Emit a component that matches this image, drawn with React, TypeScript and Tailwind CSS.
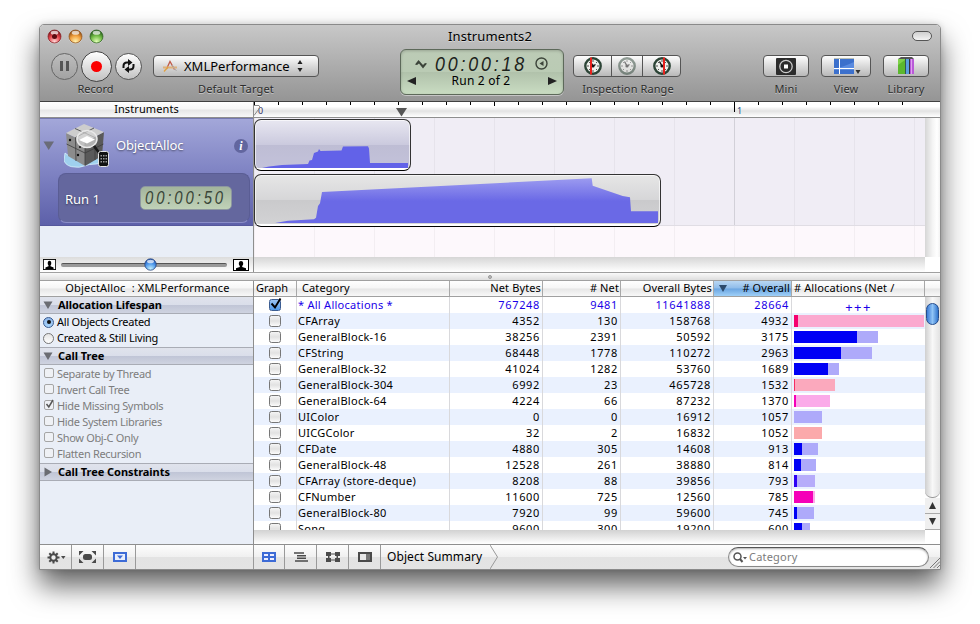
import React from "react";

type Row = { name: string; nb: string; n: string; ob: string; o: string; net: number; all: number; dark: string; light: string };

const BLUE = "#0000f5";
const PALE = "#aeaafa";

const rows: Row[] = [
  { name: "* All Allocations *", nb: "767248", n: "9481", ob: "11641888", o: "28664", net: 0, all: 0, dark: BLUE, light: PALE },
  { name: "CFArray", nb: "4352", n: "130", ob: "158768", o: "4932", net: 4, all: 130, dark: "#f5006e", light: "#fba9cf" },
  { name: "GeneralBlock-16", nb: "38256", n: "2391", ob: "50592", o: "3175", net: 63, all: 84, dark: BLUE, light: PALE },
  { name: "CFString", nb: "68448", n: "1778", ob: "110272", o: "2963", net: 47, all: 78, dark: BLUE, light: PALE },
  { name: "GeneralBlock-32", nb: "41024", n: "1282", ob: "53760", o: "1689", net: 34, all: 45, dark: BLUE, light: PALE },
  { name: "GeneralBlock-304", nb: "6992", n: "23", ob: "465728", o: "1532", net: 1, all: 40.5, dark: "#f52d62", light: "#fba9bd" },
  { name: "GeneralBlock-64", nb: "4224", n: "66", ob: "87232", o: "1370", net: 2, all: 36, dark: "#f500b8", light: "#fbaae9" },
  { name: "UIColor", nb: "0", n: "0", ob: "16912", o: "1057", net: 0, all: 28, dark: BLUE, light: PALE },
  { name: "UICGColor", nb: "32", n: "2", ob: "16832", o: "1052", net: 0, all: 28, dark: BLUE, light: "#fba9ab" },
  { name: "CFDate", nb: "4880", n: "305", ob: "14608", o: "913", net: 8, all: 24, dark: BLUE, light: PALE },
  { name: "GeneralBlock-48", nb: "12528", n: "261", ob: "38880", o: "814", net: 7, all: 22, dark: BLUE, light: PALE },
  { name: "CFArray (store-deque)", nb: "8208", n: "88", ob: "39856", o: "793", net: 3, all: 21, dark: "#2d00f5", light: "#b6acfa" },
  { name: "CFNumber", nb: "11600", n: "725", ob: "12560", o: "785", net: 19, all: 21, dark: "#f500b8", light: "#fbaae9" },
  { name: "GeneralBlock-80", nb: "7920", n: "99", ob: "59600", o: "745", net: 3, all: 20, dark: BLUE, light: PALE },
  { name: "Song", nb: "9600", n: "300", ob: "19200", o: "600", net: 8, all: 16, dark: BLUE, light: PALE },
];

const ticks = Array.from({ length: 28 }, (_, i) => i);

function Light({ kind }: { kind: "red" | "amber" | "green" }) {
  const c = {
    red: ["#ffd9d9", "#e8494f", "#7c1218"],
    amber: ["#fff3b0", "#f2a13f", "#8a4a12"],
    green: ["#e2ffb8", "#74bd48", "#245a18"],
  }[kind];
  return (
    <svg width="15" height="15" viewBox="0 0 15 15" className="block">
      <defs>
        <radialGradient id={kind} cx="50%" cy="88%" r="80%">
          <stop offset="0" stopColor={c[0]} />
          <stop offset="0.55" stopColor={c[1]} />
          <stop offset="1" stopColor={c[2]} />
        </radialGradient>
      </defs>
      <circle cx="7.5" cy="8" r="7" fill="#e0e0e0" opacity=".6" />
      <circle cx="7.5" cy="7.5" r="6.5" fill={`url(#${kind})`} stroke={c[2]} strokeWidth=".7" />
      <ellipse cx="7.5" cy="3.8" rx="3.8" ry="2" fill="#fff" opacity=".7" />
      {kind === "red" && <circle cx="7.5" cy="7.5" r="2.5" fill="#5c0a10" />}
    </svg>
  );
}

function Clock({ mark, faded }: { mark?: number; faded?: boolean }) {
  return (
    <svg width="20" height="20" viewBox="0 0 20 20" className="block" opacity={faded ? 0.5 : 1}>
      <circle cx="10" cy="10" r="7.7" fill="#eef0ec" stroke="#2c4436" strokeWidth="2.4" />
      <g stroke="#555" strokeWidth="1">
        <path d="M10 4v2M10 14v2M4 10h2M14 10h2M6 6l1 1M14 6l-1 1M6 14l1-1M14 14l-1-1" />
      </g>
      <path d="M7.5 5.5L10 10l2.5-1.5" stroke="#111" strokeWidth="1.4" fill="none" />
      <circle cx="10" cy="10" r="1.6" fill="#111" />
      {mark !== undefined && <path d={`M${mark} 1.5v17`} stroke="#e8201c" strokeWidth="2" />}
    </svg>
  );
}

function CheckBox({ on }: { on?: boolean }) {
  return (
    <span className={`relative block size-[12px] rounded-[2.5px] border ${on ? "border-[#3b5d92] bg-linear-to-b from-[#9cc4f0] to-[#4f9ae8]" : "border-[#777] bg-linear-to-b from-[#f4f4f4] via-[#e2e2e2] to-[#fbfbfb]"}`}>
      {on && (
        <svg width="14" height="14" viewBox="0 0 14 14" className="absolute -top-[3px] -left-px">
          <path d="M2.500 6.500l3.500 4L11.500 1.500" fill="none" stroke="#000" strokeWidth="1.900" />
        </svg>
      )}
    </span>
  );
}

function SmallCheck({ on, children }: { on?: boolean; children: string }) {
  return (
    <div className="flex h-[16px] items-center pl-[4px] text-[#7d7d7d]">
      <span className="relative -top-px block size-[10px] shrink-0 rounded-[2px] border border-[#a5a5a5] bg-[#eff1f5]">
        {on && (
          <svg width="10" height="11" viewBox="0 0 10 11" className="absolute -top-[3px] left-0">
            <path d="M1.5 6l2.3 3L8 2" fill="none" stroke="#555" strokeWidth="1.5" />
          </svg>
        )}
      </span>
      <span className="ml-[3px] whitespace-nowrap tracking-[-0.33px]">{children}</span>
    </div>
  );
}

function Radio({ on, children }: { on?: boolean; children: string }) {
  return (
    <div className="flex h-[16px] items-center pl-[3px]">
      <span className={`flex size-[11px] shrink-0 items-center justify-center rounded-full border ${on ? "border-[#36598f] bg-linear-to-b from-[#8fb6ea] to-[#a7d4fb]" : "border-[#777] bg-linear-to-b from-[#e4e4e4] to-white"}`}>
        {on && <span className="size-[4px] rounded-full bg-[#111]" />}
      </span>
      <span className="ml-[3px] whitespace-nowrap tracking-[-0.24px]">{children}</span>
    </div>
  );
}

function Section({ open, children }: { open?: boolean; children: string }) {
  return (
    <div className="flex h-[17px] items-center border-b border-[#a9acb5] bg-[linear-gradient(#e0e3ec_0,#dadeea_50%,#c0c5d6_51%,#cfd3e0_100%)] pl-[3px] font-bold">
      <svg width="10" height="10" viewBox="0 0 10 10" className="shrink-0">
        <path d={open ? "M0.5 1.5h9L5 9z" : "M1.5 0.5v9L9 5z"} fill="#6a6c72" />
      </svg>
      <span className="ml-[5px] whitespace-nowrap tracking-[-0.05px]">{children}</span>
    </div>
  );
}

function ToolButton({ label, width, children }: { label: string; width: string; children: React.ReactNode }) {
  return (
    <div className={`flex flex-col items-center ${width}`}>
      <div className="flex h-[22px] w-full items-center justify-center rounded-[4px] border border-[#555] bg-linear-to-b from-[#fdfdfd] to-[#b9b9b9]">{children}</div>
      <span className="mt-[4px] h-[16px] leading-[16px] whitespace-nowrap tracking-[0.15px] text-[#2c2c2c] [text-shadow:0_1px_0_#ffffff70]">{label}</span>
    </div>
  );
}

function Person({ big }: { big?: boolean }) {
  return (
    <svg width={big ? 16 : 13} height={big ? 12 : 11} viewBox="0 0 16 12" preserveAspectRatio="none" className="block">
      <rect x=".5" y=".5" width="15" height="11" fill="#fff" stroke="#000" />
      <path d="M3 11V9.3L6.8 8V7Q5.6 5.8 5.8 4 6 2 8 2t2.2 2q.2 1.800-1 3v1L13 9.300V11z" fill="#000" />
    </svg>
  );
}

function CubeIcon() {
  return (
    <svg width="46" height="46" viewBox="0 0 46 46" className="block">
      <path d="M0 38l1-8 4 3 3 1 11 1 18-3 4 5q-4 4-9 4-7 0-12 2-5 2-9 1Q3 44 0 38z" fill="#9fd0ee" stroke="#d8f1fc" strokeWidth=".8" />
      <path d="M2 10L21 19v24L4 33z" fill="#8c8c8c" />
      <path d="M21 19L40 9l-2 24-17 10z" fill="#5a5a5a" />
      <path d="M2 10L20 1l20 8-19 10z" fill="#cdcdcd" />
      <path d="M11 5.500l20 9M30 5L11.500 14.500M2.500 21L21 30l18.500-9M11.500 14.500L12 38M31 14v23M21 19v23" stroke="#3c3c3c" strokeWidth=".8" fill="none" />
      <circle cx="6" cy="17" r="1.200" fill="#111" /><circle cx="16" cy="24" r="1" fill="#111" /><circle cx="14" cy="32" r="1.200" fill="#111" />
      <ellipse cx="23" cy="16" rx="10" ry="8.500" fill="#d6d6d6" fillOpacity=".7" stroke="#e9e9e9" strokeWidth="1.500" />
      <path d="M15 17l8 3.500 8-4-8-3.500z" fill="#fff" />
      <path d="M30 23l6 8" stroke="#1a1a1a" strokeWidth="2.600" />
      <rect x="34.500" y="28.500" width="10" height="15" rx="2" fill="#111" stroke="#e4e4e4" strokeWidth="1" />
      <g fill="#999"><path d="M36.500 32h1.500v1.500h-1.500zM39 32h1.500v1.500H39zM41.500 32H43v1.500h-1.500zM36.500 35h1.500v1.500h-1.500zM39 35h1.500v1.500H39zM41.500 35H43v1.500h-1.500zM36.500 38h1.500v1.500h-1.500zM39 38h1.500v1.500H39zM41.500 38H43v1.500h-1.500z" /></g>
    </svg>
  );
}

const head = "flex h-full items-center whitespace-nowrap border-r border-[#a8a8a8] tracking-[0.12px]";
const HEADER_BG = "bg-[linear-gradient(#ffffff_0,#f6f6f6_48%,#e6e6e6_52%,#f8f8f8_100%)]";

export default function App() {
  return (
    <div className="h-[624px] w-[980px] overflow-hidden bg-white pt-[24px] pl-[39px] font-['Noto_Sans','Open_Sans',sans-serif] text-[11px] leading-[14px] text-black">
      <div className="flex h-[546px] w-[902px] flex-col overflow-hidden rounded-t-[5px] border border-[#8a8a8a] bg-white shadow-[0_16px_28px_rgba(0,0,0,0.62),0_0_6px_rgba(0,0,0,0.15)]">
        <header className="h-[77px] shrink-0 border-b border-[#404040] bg-linear-to-b from-[#c8c8c8] to-[#959595]">
          <div className="flex h-[22px] items-center">
            <div className="flex w-[300px] gap-[6px] pl-[7px]">
              <Light kind="red" /><Light kind="amber" /><Light kind="green" />
            </div>
            <div className="flex-1 text-center text-[13px] leading-[20px] tracking-[0.1px] [text-shadow:0_1px_0_#ffffff70]">Instruments2</div>
            <div className="flex w-[300px] justify-end pr-[8px]">
              <span className="h-[10px] w-[20px] rounded-[5px] border border-[#555] bg-linear-to-b from-[#cfcfcf] to-[#f4f4f4]" />
            </div>
          </div>
          <div className="flex pt-[2px]">
            <div className="ml-[11px] flex w-[91px] flex-col items-center">
              <div className="flex h-[34px] items-center gap-[3px]">
                <span className="flex size-[27px] items-center justify-center gap-[3px] rounded-full border border-[#666] bg-linear-to-b from-[#bdbdbd] to-[#a2a2a2]">
                  <i className="h-[10px] w-[3px] bg-[#555]" /><i className="h-[10px] w-[3px] bg-[#555]" />
                </span>
                <span className="flex size-[31px] items-center justify-center rounded-full border border-[#444] bg-linear-to-b from-white to-[#c2c2c2]">
                  <i className="size-[11px] rounded-full bg-[#fb0000]" />
                </span>
                <span className="flex size-[27px] items-center justify-center rounded-full border border-[#555] bg-linear-to-b from-white to-[#c2c2c2]">
                  <svg width="15" height="14" viewBox="0 0 15 14" fill="none" stroke="#111" strokeWidth="2">
                    <path d="M2.500 9V7q0-3.500 3.500-3.500h2" /><path d="M12.500 5v2q0 3.500-3.500 3.500H7" />
                    <path d="M7 0l4.500 3.500L7 7zM8 7l-4.500 3.500L8 14z" fill="#111" stroke="none" />
                  </svg>
                </span>
              </div>
              <span className="mt-[-2px] mr-[2px] h-[16px] leading-[16px] text-[#2c2c2c] [text-shadow:0_1px_0_#ffffff70]">Record</span>
            </div>
            <div className="ml-[11px] flex w-[166px] flex-col items-center pt-[6px]">
              <div className="flex h-[22px] w-full items-center rounded-[4px] border border-[#555] bg-linear-to-b from-[#fdfdfd] to-[#b9b9b9] pl-[8px]">
                <svg width="16" height="14" viewBox="0 0 16 14" fill="none" className="shrink-0">
                  <path d="M4.500 10L8 2.500l4.500 8" stroke="#c05a48" strokeWidth="1.300" />
                  <path d="M1 8.500h14" stroke="#dfb07a" strokeWidth="1.800" /><path d="M2 12.500l4-4.500" stroke="#e0a040" strokeWidth="1.300" /><path d="M10 6l4.500 6" stroke="#aaa" />
                </svg>
                <span className="ml-[6px] w-[113px] text-[13px] leading-[20px] whitespace-nowrap">XMLPerformance</span>
                <svg width="6" height="12" viewBox="0 0 6 12"><path d="M3 0l2.500 4h-5zM3 12l2.500-4h-5z" fill="#222" /></svg>
              </div>
              <span className="mt-[4px] h-[16px] leading-[16px] tracking-[0.18px] whitespace-nowrap text-[#2c2c2c] [text-shadow:0_1px_0_#ffffff70]">Default Target</span>
            </div>
            <div className="ml-[81px] flex h-[46px] w-[164px] flex-col rounded-[6px] border border-[#5d695a] bg-[linear-gradient(#bccbb6_0,#bacbb4_50%,#b1c2ab_51%,#c9dcc2_100%)] shadow-[0_1px_0_#ffffff70,inset_0_1px_3px_#00000030]">
              <div className="flex h-[24px] items-center pt-[3px] pl-[13px]">
                <svg width="14" height="12" viewBox="0 0 14 12" fill="#3c443a" className="shrink-0"><path d="M1 6.500L4.500 2l4.500 5L11 5l2 .5L9 10.500 5 5.500 3 7z" /></svg>
                <span className="ml-[7px] w-[95px] shrink-0 origin-left scale-x-85 font-['Liberation_Sans',sans-serif] text-[21px] leading-[22px] tracking-[3.3px] whitespace-nowrap text-[#1d231c] italic">00:00:18</span>
                <svg width="13" height="13" viewBox="0 0 13 13" className="ml-[5px] shrink-0"><circle cx="6.500" cy="6.500" r="5.500" fill="none" stroke="#3c443a" strokeWidth="1.400" /><path d="M8.500 4v5L4.500 6.500z" fill="#3c443a" /></svg>
              </div>
              <div className="flex h-[14px] items-center justify-between px-[6px]">
                <svg width="9" height="8" viewBox="0 0 9 8"><path d="M9 0v8L0 4z" fill="#222" /></svg>
                <span className="mr-[2px] text-[12px] leading-[16px] tracking-[0.2px]">Run 2 of 2</span>
                <svg width="9" height="8" viewBox="0 0 9 8"><path d="M0 0v8l9-4z" fill="#222" /></svg>
              </div>
            </div>
            <div className="ml-[9px] flex w-[108px] flex-col items-center pt-[6px]">
              <div className="flex h-[22px] w-full overflow-hidden rounded-[4px] border border-[#555] bg-linear-to-b from-[#fdfdfd] to-[#b9b9b9]">
                <span className="flex w-[38px] items-center justify-center border-r border-[#555]"><Clock mark={8} /></span>
                <span className="flex w-[31px] items-center justify-center border-r border-[#555]"><Clock faded /></span>
                <span className="flex flex-1 items-center justify-center"><Clock mark={12} /></span>
              </div>
              <span className="mt-[4px] ml-[2px] h-[16px] leading-[16px] tracking-[0.1px] whitespace-nowrap text-[#2c2c2c] [text-shadow:0_1px_0_#ffffff70]">Inspection Range</span>
            </div>
            <div className="ml-[82px] flex gap-[12px] pt-[6px]">
              <ToolButton label="Mini" width="w-[46px]">
                <svg width="20" height="17" viewBox="0 0 20 17"><rect width="20" height="17" rx="1" fill="#2c2c2c" /><circle cx="10" cy="8.500" r="6.200" fill="none" stroke="#ccc" strokeWidth="1.300" /><rect x="8" y="6.500" width="4" height="4" fill="#fff" /></svg>
              </ToolButton>
              <ToolButton label="View" width="w-[50px]">
                <svg width="27" height="17" viewBox="0 0 27 17" className="ml-[2px]"><rect width="20" height="16" fill="#3c70cc" /><path d="M0 11Q9 9 20 4v8H0z" fill="#5a8be0" /><path d="M0 .5h20" stroke="#b9bfb5" /><path d="M5.500 1v15M0 10.500h20" stroke="#fff" /><path d="M21.500 12h5L24 16z" fill="#333" /></svg>
              </ToolButton>
              <ToolButton label="Library" width="w-[46px]">
                <svg width="18" height="18" viewBox="0 0 18 18"><path d="M1 2l3-2h11l2 2z" fill="#555" /><rect x="1" y="2" width="7" height="15" fill="#7fd14a" /><path d="M1 17V8l7-5v14z" fill="#5cb82e" /><rect x="8" y="1" width="1" height="16" fill="#355" /><rect x="9" y="2" width="3" height="15" fill="#5a9fe0" /><rect x="12" y="2" width="1" height="15" fill="#333" /><rect x="13" y="2" width="4" height="15" fill="#b95ad8" /><path d="M14.500 2v15" stroke="#e0a0f0" /></svg>
              </ToolButton>
            </div>
          </div>
        </header>

        <div className="flex h-[16px] shrink-0 border-b border-[#8e8e8e]">
          <div className={`w-[214px] shrink-0 border-r border-[#8e8e8e] text-center leading-[14px] tracking-[0.1px] ${HEADER_BG}`}>Instruments</div>
          <div className="relative flex-1 bg-[linear-gradient(#fff_0,#fff_30%,#e3e3e3_60%,#fff_100%)]">
            <div className="flex">
              {ticks.map((i) => (
                <span key={i} className="w-[24px] shrink-0">
                  <i className={`block w-px bg-black ${i === 20 ? "h-[10px]" : i === 10 ? "h-[4px]" : "h-[3px]"}`} />
                </span>
              ))}
            </div>
            <span className="absolute top-[4px] left-[483px] text-[9px] leading-[10px] text-[#234f86]">1</span>
            <span className="absolute top-[4px] left-[4px] text-[9px] leading-[10px] text-[#336]">0</span>
            <svg width="9" height="12" viewBox="0 0 9 12" className="absolute top-[3px] left-0"><path d="M0 .5h5l1 2-6 8" fill="none" stroke="#888" /></svg>
            <svg width="11" height="9" viewBox="0 0 11 9" className="absolute top-[6px] left-[142px]"><path d="M0 0h11L5.500 8.500z" fill="#555" /></svg>
          </div>
        </div>

        <div className="flex h-[139px] shrink-0">
          <div className="w-[214px] shrink-0 border-r border-[#8e8e8e] bg-[#e9eef7]">
            <div className="h-[108px] border-t border-b border-t-[#7578ae] border-b-[#55579c] bg-linear-to-b from-[#a3a7d9] via-[#7f83c3] to-[#5d60a9]">
              <div className="flex h-[54px] items-center pl-[3px]">
                <svg width="12" height="10" viewBox="0 0 12 10"><path d="M.5.5h10.500L5.700 9z" fill="#6a6c78" /></svg>
                <div className="ml-[9px]"><CubeIcon /></div>
                <span className="mb-[3px] ml-[6px] text-[13px] leading-[18px] tracking-[-0.15px] text-white [text-shadow:0_1px_2px_#00000080]">ObjectAlloc</span>
                <span className="mr-[5px] ml-auto flex size-[14px] items-center justify-center rounded-full bg-[#62669f] font-['Liberation_Serif',serif] text-[12px] leading-[12px] font-bold text-white italic">i</span>
              </div>
              <div className="ml-[18px] flex h-[50px] w-[192px] items-center rounded-[8px] border border-[#5a5d94] border-b-[#8a8dc8] bg-[#64679e] pl-[6px]">
                <span className="mt-[2px] w-[75px] text-[13px] leading-[18px] text-white [text-shadow:0_1px_2px_#00000080]">Run 1</span>
                <span className="flex h-[24px] w-[92px] items-center overflow-hidden rounded-[5px] border border-[#8d97a0] bg-linear-to-b from-[#a3b49c] to-[#c0d2b8] pl-[4px]">
                  <span className="shrink-0 origin-left scale-x-85 font-['Liberation_Sans',sans-serif] text-[17.5px] leading-[22px] tracking-[3.4px] whitespace-nowrap text-[#3a4638] italic">00:00:50</span>
                </span>
              </div>
            </div>
          </div>
          <div className="w-[671px] shrink-0">
            <div className="relative h-[108px] border-b border-[#e0dde4] bg-[#f0edf5] bg-[linear-gradient(to_right,#e6e3eb_1px,transparent_1px)] bg-size-[60px_100%]">
              <div className="flex h-full flex-col gap-[3px] pt-px">
                <div className="h-[52px] w-[157px] shrink-0 overflow-hidden rounded-[7px] border border-[#333] border-b-black bg-[linear-gradient(#e8e7f1_0,#cbcade_49%,#bebdd4_50%,#c3c2da_95%,#fff_96%)] shadow-[inset_0_0_0_1px_#ffffffa0]">
                  <svg width="155" height="50" viewBox="255 120 155 50"><path d="M262 168l7-1.500 13-1.500 26-1 1.500-3.500 2.500-.4 2-7 4-1.600 1-2.500 1.500 2 21-.4 1.500-4 25-.3 1 2.300 1 14.400h38v5z" fill="#6262e8" /></svg>
                </div>
                <div className="h-[53px] w-[407px] shrink-0 overflow-hidden rounded-[7px] border border-[#333] border-b-black bg-[linear-gradient(#e6e6e6_0,#d6d6d8_49%,#cacacc_50%,#d2d2d4_95%,#fff_96%)] shadow-[inset_0_0_0_1px_#ffffffa0]">
                  <svg width="405" height="51" viewBox="255 175 405 51">
                    <defs><linearGradient id="fill2" x1="0" y1="178" x2="0" y2="201" gradientUnits="userSpaceOnUse"><stop offset="0" stopColor="#9c9bf0" /><stop offset="1" stopColor="#6a69e6" /></linearGradient></defs>
                    <path d="M275 223l13-2.300 26-1.400 2-1.600 2-11.700 2-2.700 2-11.300 269.700-13.700 1 7.400 30 10.300 7.300 1.300 1 14h27v11.700z" fill="url(#fill2)" />
                  </svg>
                </div>
              </div>
              <i className="absolute top-0 left-[480px] h-full w-px bg-[#d2d0d8]" />
            </div>
            <div className="h-[31px] bg-[#fdf8fc] bg-[linear-gradient(to_right,#f3eef2_1px,transparent_1px)] bg-size-[60px_100%]" />
          </div>
          <div className="flex-1 bg-[linear-gradient(to_right,#d6d6d6_0,#f4f4f4_50%,#ffffff_80%,#f2f2f2_100%)]" />
        </div>

        <div className="flex h-[16px] shrink-0 border-b border-[#a0a0a0]">
          <div className="flex w-[214px] shrink-0 items-center border-r border-[#8e8e8e] bg-linear-to-b from-[#dcdcdc] to-white pl-[3px]">
            <Person />
            <div className="relative ml-[5px] h-[4px] w-[166px] rounded-[2px] border-t border-[#555] bg-[#999]">
              <svg width="13" height="13" viewBox="0 0 13 13" className="absolute -top-[6px] left-[83px]">
                <defs><radialGradient id="knob" cx="50%" cy="90%" r="85%"><stop offset="0" stopColor="#c8f4ff" /><stop offset=".6" stopColor="#4b96ea" /><stop offset="1" stopColor="#2355b0" /></radialGradient></defs>
                <circle cx="6.500" cy="6.500" r="5.700" fill="url(#knob)" stroke="#24427c" strokeWidth=".8" /><ellipse cx="6.500" cy="3.500" rx="3.500" ry="1.800" fill="#fff" opacity=".7" />
              </svg>
            </div>
            <div className="ml-[6px]"><Person big /></div>
          </div>
          <div className="w-[671px] bg-linear-to-b from-[#d6d6d6] to-white" />
        </div>
        <div className="flex h-[8px] shrink-0 items-center justify-center border-b border-[#a0a0a0] bg-linear-to-b from-[#fafafa] to-[#dedede]">
          <i className="size-[4px] rounded-full border border-[#999] bg-[#bbb]" />
        </div>

        <div className="flex h-[263px] shrink-0">
          <aside className="w-[214px] shrink-0 border-r border-[#8e8e8e] bg-[#e9eef7]">
            <div className={`h-[16px] border-b border-[#a0a0a0] pl-[2px] text-center leading-[14px] tracking-[0.18px] whitespace-pre ${HEADER_BG}`}>{"ObjectAlloc  : XMLPerformance"}</div>
            <Section open>Allocation Lifespan</Section>
            <div className="h-[34px] border-b border-[#a9acb5]">
              <Radio on>All Objects Created</Radio>
              <Radio>Created &amp; Still Living</Radio>
            </div>
            <Section open>Call Tree</Section>
            <div className="h-[99px] border-b border-[#a9acb5] pt-px">
              <SmallCheck>Separate by Thread</SmallCheck>
              <SmallCheck>Invert Call Tree</SmallCheck>
              <SmallCheck on>Hide Missing Symbols</SmallCheck>
              <SmallCheck>Hide System Libraries</SmallCheck>
              <SmallCheck>Show Obj-C Only</SmallCheck>
              <SmallCheck>Flatten Recursion</SmallCheck>
            </div>
            <Section>Call Tree Constraints</Section>
          </aside>
          <div className="min-w-0 flex-1">
            <div className={`flex h-[16px] border-b border-[#a0a0a0] ${HEADER_BG}`}>
              <span className={`${head} w-[43px] pl-[2px]`}><span className="mb-px tracking-[0px]">Graph</span></span>
              <span className={`${head} w-[153px] pb-px pl-[5px]`}>Category</span>
              <span className={`${head} w-[93px] justify-end pr-px pb-px`}>Net Bytes</span>
              <span className={`${head} w-[78px] justify-end pr-px pb-px`}># Net</span>
              <span className={`${head} w-[93px] justify-end pr-px pb-px`}>Overall Bytes</span>
              <span className={`${head} w-[78px] justify-between bg-[linear-gradient(#b9d7f3_0,#8fbcea_48%,#6ba5e1_52%,#9fd0f8_100%)] pr-px pb-px pl-[5px]`}>
                <svg width="8" height="7" viewBox="0 0 8 7"><path d="M0 0h8L4 7z" fill="#2c4a6c" /></svg># Overall
              </span>
              <span className={`${head} w-[133px] pb-px pl-[2px]`}># Allocations (Net /</span>
              <span className="flex-1" />
            </div>
            <div className="flex h-[247px]">
              <div className="w-[671px] shrink-0">
                <div className="h-[233px] overflow-hidden">
                  {rows.map((r, i) => (
                    <div key={r.name} className={`flex h-[16px] items-center leading-[16px] ${i % 2 ? "bg-[#eaf1fe]" : "bg-white"} ${i === 0 ? "text-[#1a00e8]" : ""}`}>
                      <span className="flex h-full w-[43px] items-center justify-center border-r border-[#d9d9dc]"><CheckBox on={i === 0} /></span>
                      <span className="h-full w-[153px] border-r border-[#d9d9dc] pl-px tracking-[0.27px] whitespace-nowrap">{r.name}</span>
                      <span className="h-full w-[93px] border-r border-[#d9d9dc] pr-[2px] text-right tracking-[0.66px]">{r.nb}</span>
                      <span className="h-full w-[78px] border-r border-[#d9d9dc] pr-[2px] text-right tracking-[0.66px]">{r.n}</span>
                      <span className="h-full w-[93px] border-r border-[#d9d9dc] pr-[2px] text-right tracking-[0.66px]">{r.ob}</span>
                      <span className="h-full w-[78px] border-r border-[#d9d9dc] pr-[2px] text-right tracking-[0.66px]">{r.o}</span>
                      {i === 0 ? (
                        <span className="w-[133px] pt-[3px] text-center text-[13px] leading-[12px] tracking-[1.4px]">+++</span>
                      ) : (
                        <span className="ml-[2px] h-[12px]" style={{ width: r.all, background: r.light }}>
                          <i className="block h-full" style={{ width: r.net, background: r.dark }} />
                        </span>
                      )}
                    </div>
                  ))}
                </div>
                <div className="h-[14px] bg-linear-to-b from-[#d2d2d2] to-white" />
              </div>
              <div className="flex h-[233px] flex-1 flex-col bg-white">
                <div className="flex h-[201px] flex-col items-center rounded-b-[7px] border-b border-[#999] bg-linear-to-r from-[#cfcfcf] via-[#f8f8f8] to-[#e2e2e2] pt-[6px]">
                  <span className="h-[22px] w-[13px] rounded-[7px] border border-[#244c8c] bg-linear-to-r from-[#3a7ad4] via-[#90c4f6] to-[#2f74cc]" />
                </div>
                <div className="flex h-[16px] items-center justify-center border-b border-[#aaa] bg-[#f0f0f0]"><svg width="7" height="7" viewBox="0 0 7 7"><path d="M3.500 0L7 7H0z" fill="#333" /></svg></div>
                <div className="flex h-[16px] items-center justify-center border-b border-[#aaa] bg-[#f0f0f0]"><svg width="7" height="7" viewBox="0 0 7 7"><path d="M3.500 7L7 0H0z" fill="#333" /></svg></div>
              </div>
            </div>
          </div>
        </div>

        <footer className="flex min-h-0 flex-1 border-t border-[#8e8e8e] bg-[linear-gradient(#fdfdfd_0,#f0f0f0_49%,#e3e3e3_51%,#e4e4e4_100%)]">
          <div className="flex w-[214px] shrink-0 border-r border-[#999]">
            <span className="flex w-[32px] items-center justify-center border-r border-[#999]">
              <svg width="19" height="13" viewBox="0 0 19 13" className="ml-[2px]"><g stroke="#4a4a4a" strokeWidth="2"><path d="M6.500 .5v12M.5 6.500h12M2.300 2.300l8.400 8.400M10.700 2.300l-8.400 8.400" /></g><circle cx="6.500" cy="6.500" r="3.200" fill="#eee" stroke="#4a4a4a" strokeWidth="2" /><path d="M14 5h4.500l-2.200 3z" fill="#4a4a4a" /></svg>
            </span>
            <span className="flex w-[32px] items-center justify-center border-r border-[#999]">
              <svg width="17" height="12" viewBox="0 0 17 12" fill="#4a4a4a"><path d="M0 0h4.500L0 4.500zM17 0h-4.500L17 4.500zM0 12h4.500L0 7.500zM17 12h-4.500L17 7.500z" /><rect x="4" y="3" width="9" height="6" rx="2.500" /></svg>
            </span>
            <span className="flex w-[32px] items-center justify-center border-r border-[#999]">
              <svg width="14" height="10" viewBox="0 0 14 10"><rect x="1" y="1" width="12" height="8" fill="#e8eefc" stroke="#3d6bd6" strokeWidth="2" /><path d="M4 3.500h6L7 7z" fill="#3d6bd6" /></svg>
            </span>
          </div>
          <span className="flex w-[31px] items-center justify-center border-r border-[#999]">
            <svg width="14" height="10" viewBox="0 0 14 10"><rect width="14" height="10" fill="#3d6bd6" /><path d="M2 2h4v2H2zM8 2h4v2H8zM2 6h4v2H2zM8 6h4v2H8z" fill="#eef" /></svg>
          </span>
          <span className="flex w-[32px] items-center justify-center border-r border-[#999]">
            <svg width="14" height="10" viewBox="0 0 14 10"><path d="M0 1h10M3 3.670h9M3 6.330h9M1 9h13" stroke="#4a4a4a" strokeWidth="1.500" /></svg>
          </span>
          <span className="flex w-[32px] items-center justify-center border-r border-[#999]">
            <svg width="14" height="10" viewBox="0 0 14 10" fill="#4a4a4a"><path d="M0 0h5v4H0zM9 0h5v4H9zM0 6h5v4H0zM9 6h5v4H9zM5 1.500h4v1H5zM5 7.500h4v1H5zM2 4h1.500v2H2zM10.500 4H12v2h-1.500z" /></svg>
          </span>
          <span className="flex w-[32px] items-center justify-center border-r border-[#999]">
            <svg width="14" height="10" viewBox="0 0 14 10"><rect x="1" y="1" width="12" height="8" fill="#e8e8e8" stroke="#4a4a4a" strokeWidth="2" /><path d="M8 2h4v6H8z" fill="#777" /></svg>
          </span>
          <span className="w-[104px] self-center pl-[6px] text-[12px] leading-[16px] tracking-[0.08px] whitespace-nowrap">Object Summary</span>
          <svg width="9" height="24" viewBox="0 0 9 24" className="ml-[5px] shrink-0"><path d="M0 0l7.500 12L0 24" fill="none" stroke="#999" /></svg>
          <div className="mt-[2px] ml-auto flex h-[20px] w-[201px] items-center rounded-full border border-[#888] border-t-[#555] bg-white pl-[4px] shadow-[inset_0_1px_2px_#00000050]">
            <svg width="14" height="11" viewBox="0 0 14 11"><circle cx="4.500" cy="4.500" r="3.500" fill="none" stroke="#555" strokeWidth="1.500" /><path d="M7 7l2.500 3" stroke="#555" strokeWidth="2" /><path d="M10 5h4l-2 2.500z" fill="#555" /></svg>
            <span className="ml-[2px] tracking-[0.2px] text-[#7c7c7c]">Category</span>
          </div>
          <svg width="11" height="12" viewBox="0 0 11 12" className="mt-[12px] shrink-0"><path d="M1 11L11 1M4.500 11L11 4.500M8 11l3-3" stroke="#777" /></svg>
        </footer>
      </div>
    </div>
  );
}
